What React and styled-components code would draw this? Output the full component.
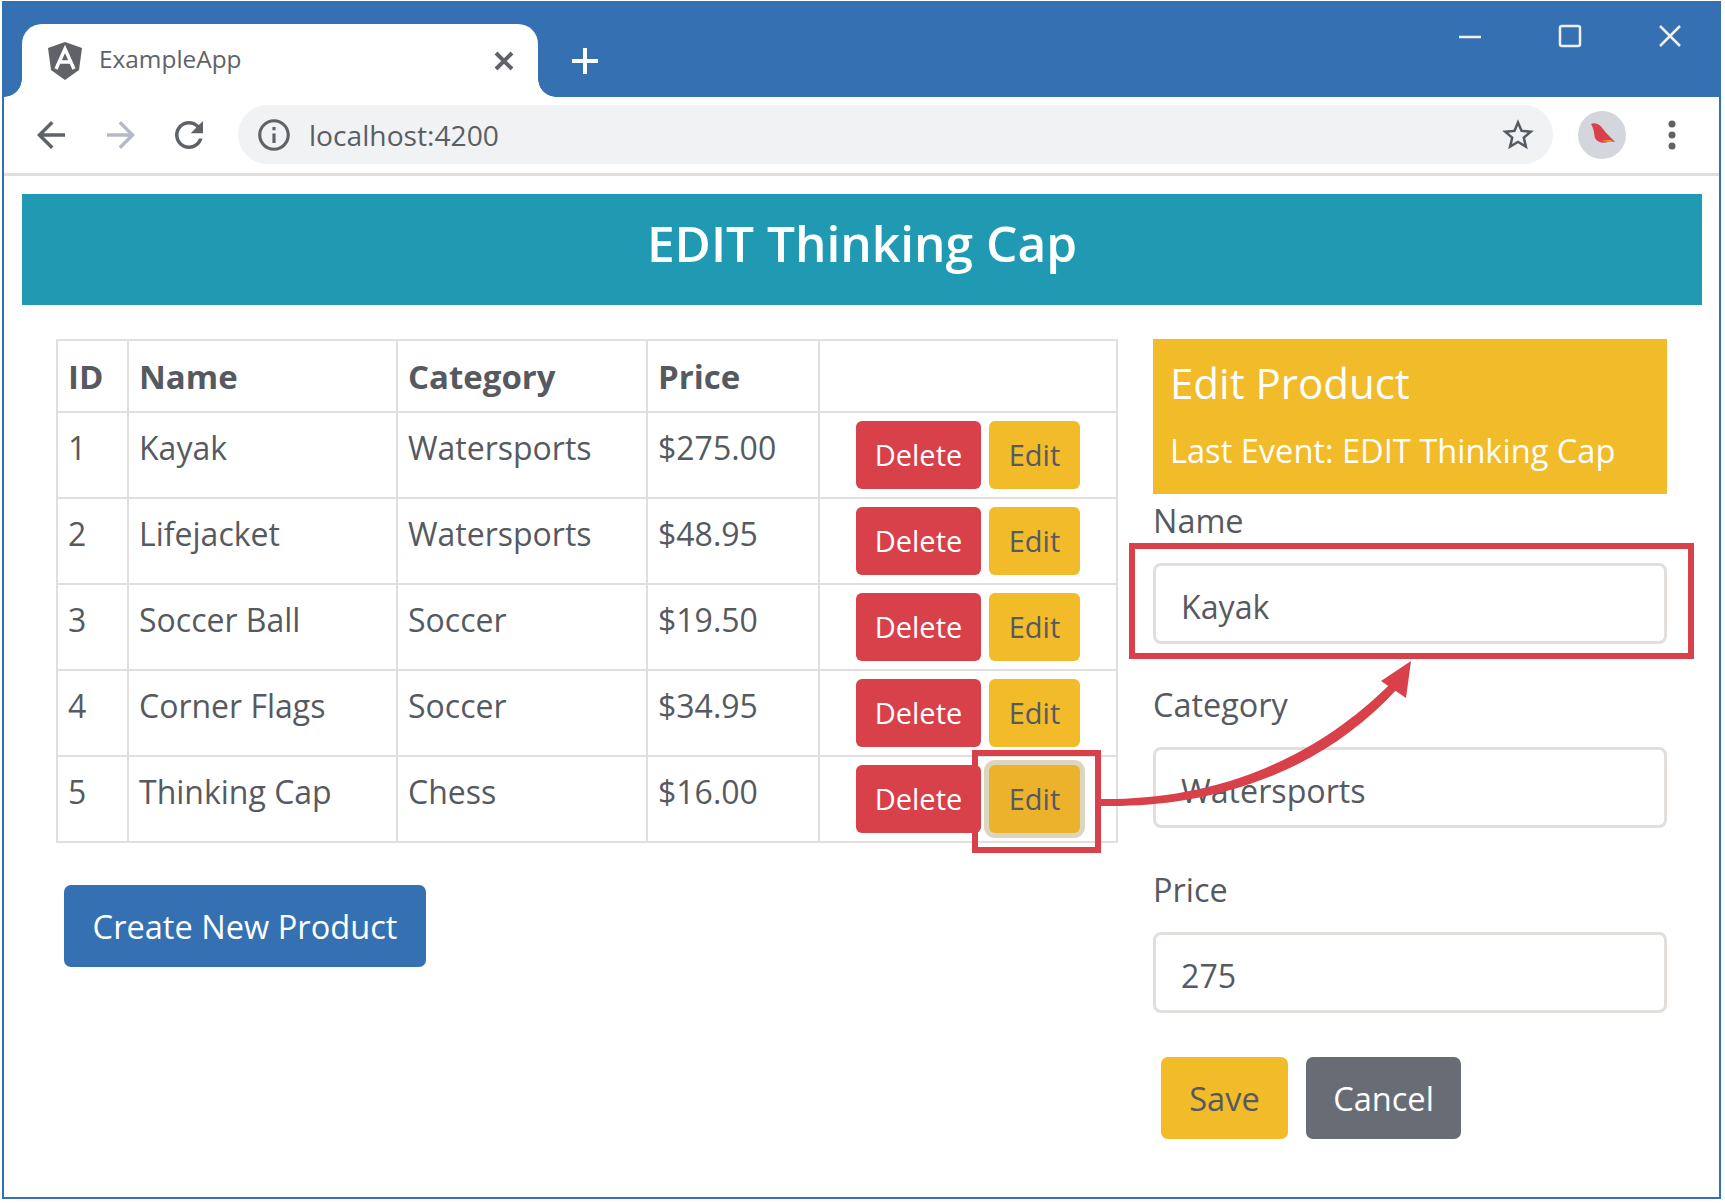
import React from "react";
import styled, { createGlobalStyle } from "styled-components";

const Global = createGlobalStyle`
  html, body { margin: 0; padding: 0; background: #fff; }
  body { font-family: "Open Sans", "Noto Sans", sans-serif; color: #565a60; }
  * { box-sizing: border-box; }
`;

const BLUE = "#3470b2";
const RED = "#d8404a";
const YELLOW = "#f1bb29";
const LINE = "#e2dedb";

const Frame = styled.div`
  position: relative;
  width: 1719px;
  height: 1198px;
  margin: 1px 0 0 2px;
  border: 2px solid ${BLUE};
  background: #fff;
  overflow: hidden;
`;
const TitleBar = styled.div`
  height: 94px;
  background: ${BLUE};
  display: flex;
  align-items: flex-start;
  padding-left: 18px;
`;
const Tab = styled.div`
  position: relative;
  width: 516px;
  height: 73px;
  margin-top: 21px;
  background: #fff;
  border-radius: 20px 20px 0 0;
  display: flex;
  align-items: center;
  padding: 0 24px 0 25px;
  &::before, &::after {
    content: "";
    position: absolute;
    bottom: 0;
    width: 18px;
    height: 18px;
  }
  &::before { left: -18px; background: radial-gradient(circle at 0 0, ${BLUE} 17.5px, #fff 18px); }
  &::after { right: -18px; background: radial-gradient(circle at 100% 0, ${BLUE} 17.5px, #fff 18px); }
`;
const TabTitle = styled.span`
  flex: 1;
  margin: 0 0 4px 16px;
  font-size: 24.4px;
  color: #5f6368;
`;
const NewTab = styled.svg`
  width: 28px;
  height: 28px;
  margin: 44px 0 0 33px;
`;
const Spacer = styled.div`flex: 1;`;
const WinControls = styled.div`
  display: flex;
  gap: 76px;
  padding: 21px 37px 0 0;
`;
const WinIcon = styled.svg`
  width: 24px;
  height: 24px;
  display: block;
`;
const Toolbar = styled.div`
  height: 79px;
  border-bottom: 3px solid ${LINE};
  display: flex;
  align-items: center;
  padding: 0 0 1px 26px;
`;
const NavIcon = styled.svg`
  width: ${(p) => p.$size || 42}px;
  height: ${(p) => p.$size || 42}px;
  display: block;
  margin-right: ${(p) => p.$gap || 0}px;
  flex: none;
`;
const AddressBar = styled.div`
  width: 1315px;
  height: 59px;
  border-radius: 30px;
  background: #f1f2f3;
  display: flex;
  align-items: center;
  padding: 0 16px 0 17px;
`;
const Url = styled.span`
  flex: 1;
  margin-left: 16px;
  font-size: 28.2px;
  color: #5a5e64;
`;
const Avatar = styled.svg`
  width: 48px;
  height: 48px;
  margin: 0 42px 0 25px;
  flex: none;
`;
const Banner = styled.h1`
  margin: 18px 17px 0 18px;
  height: 111px;
  background: #209ab3;
  color: #fff;
  font-size: 49.6px;
  font-weight: 600;
  text-align: center;
  line-height: 98px;
`;
const Main = styled.div`
  display: flex;
  margin-top: 34px;
  padding-left: 52px;
`;
const LeftCol = styled.div`
  width: 1062px;
  flex: none;
`;
const RightCol = styled.div`
  width: 514px;
  margin-left: 35px;
  flex: none;
`;
const Table = styled.table`
  width: 1060px;
  table-layout: fixed;
  border-collapse: collapse;
  font-size: 32px;
`;
const Th = styled.th`
  border: 2px solid ${LINE};
  height: 70px;
  padding: 11px 10px 9px;
  text-align: left;
  font-weight: 700;
  font-size: 33px;
  line-height: 50px;
  vertical-align: top;
`;
const Td = styled.td`
  border: 2px solid ${LINE};
  height: 86px;
  padding: 10px 10px;
  line-height: 50px;
  vertical-align: top;
`;
const ActionCell = styled(Td)`
  padding: 8px 0 0;
  text-align: center;
`;
const Actions = styled.div`
  display: flex;
  justify-content: center;
  gap: 8px;
`;
const SmallButton = styled.button`
  position: relative;
  height: 68px;
  width: ${(p) => p.$w}px;
  border: 0;
  border-radius: 6px;
  background: ${(p) => (p.$danger ? RED : YELLOW)};
  color: ${(p) => (p.$danger ? "#fff" : "#565a60")};
  font: 29px "Open Sans", sans-serif;
  padding: 0 0 2px;
  ${(p) => p.$focus && `
    background: #ecb22c;
    box-shadow: 0 0 0 5px #dcd5c0;
    &::after {
      content: "";
      position: absolute;
      inset: -15px -21px -20px -17px;
      border: 6px solid ${RED};
    }
  `}
`;
const CreateButton = styled.button`
  display: block;
  width: 362px;
  height: 82px;
  margin: 42px 0 0 8px;
  border: 0;
  border-radius: 7px;
  background: ${BLUE};
  color: #fff;
  font: 32.6px "Open Sans", sans-serif;
`;
const Panel = styled.div`
  height: 155px;
  background: ${YELLOW};
  color: #fff;
  padding: 14px 17px 0;
`;
const PanelTitle = styled.div`
  font-size: 42px;
  line-height: 60px;
  font-weight: 500;
`;
const PanelSub = styled.div`
  font-size: 32.6px;
  line-height: 48px;
  margin-top: 14px;
`;
const Field = styled.div`
  margin-top: ${(p) => p.$top}px;
`;
const Label = styled.label`
  display: block;
  font-size: 32.4px;
  line-height: 48px;
  margin-bottom: 19px;
`;
const InputWrap = styled.div`
  position: relative;
  ${(p) => p.$highlight && `
    &::after {
      content: "";
      position: absolute;
      inset: -20px -27px -15px -24px;
      border: 6px solid ${RED};
      pointer-events: none;
    }
  `}
`;
const Input = styled.input`
  display: block;
  width: 100%;
  height: 81px;
  border: 3px solid ${LINE};
  border-radius: 8px;
  padding: 6px 25px 0;
  font: 32.2px "Open Sans", sans-serif;
  color: #565a60;
  background: #fff;
  outline: none;
`;
const FormActions = styled.div`
  display: flex;
  gap: 18px;
  margin: 44px 0 0 8px;
`;
const FormButton = styled.button`
  height: 82px;
  width: ${(p) => p.$w}px;
  border: 0;
  border-radius: 7px;
  background: ${(p) => (p.$secondary ? "#686c74" : YELLOW)};
  color: ${(p) => (p.$secondary ? "#fff" : "#565a60")};
  font: 32.6px "Open Sans", sans-serif;
  padding: 0;
`;
const ArrowOverlay = styled.svg`
  position: absolute;
  left: -4px;
  top: -3px;
  width: 1725px;
  height: 1204px;
  pointer-events: none;
`;

const rows = [
  [1, "Kayak", "Watersports", "$275.00"],
  [2, "Lifejacket", "Watersports", "$48.95"],
  [3, "Soccer Ball", "Soccer", "$19.50"],
  [4, "Corner Flags", "Soccer", "$34.95"],
  [5, "Thinking Cap", "Chess", "$16.00"],
];

const AngularLogo = () => (
  <svg width="36" height="38" viewBox="0 0 36 38" style={{ flex: "none" }}>
    <path d="M18 0 L1 6 L4 28 L18 38 L32 28 L35 6 Z" fill="#5f6368" />
    <path d="M9 27 L18 7 L27 27 M12.5 20 H23.5" fill="none" stroke="#fff" strokeWidth="3.4" />
  </svg>
);

export default function App() {
  return (
    <>
      <Global />
      <Frame>
        <TitleBar>
          <Tab>
            <AngularLogo />
            <TabTitle>ExampleApp</TabTitle>
            <svg width="20" height="20" viewBox="0 0 20 20">
              <path d="M2 2 L18 18 M18 2 L2 18" stroke="#5f6368" strokeWidth="4" />
            </svg>
          </Tab>
          <NewTab viewBox="0 0 28 28">
            <path d="M14 1 V27 M1 14 H27" stroke="#fff" strokeWidth="4" />
          </NewTab>
          <Spacer />
          <WinControls>
            <WinIcon viewBox="0 0 24 24"><path d="M1 13 H23" stroke="#f0f0f0" strokeWidth="2.5" /></WinIcon>
            <WinIcon viewBox="0 0 24 24"><rect x="2" y="2" width="20" height="20" rx="2" fill="none" stroke="#f0f0f0" strokeWidth="2.5" /></WinIcon>
            <WinIcon viewBox="0 0 24 24"><path d="M2 2 L22 22 M22 2 L2 22" stroke="#f0f0f0" strokeWidth="2.5" /></WinIcon>
          </WinControls>
        </TitleBar>
        <Toolbar>
          <NavIcon $gap={28} viewBox="0 0 24 24"><path fill="#5f6368" d="M20 11H7.83l5.59-5.59L12 4l-8 8 8 8 1.41-1.41L7.83 13H20v-2z" /></NavIcon>
          <NavIcon $gap={26} viewBox="0 0 24 24"><path fill="#b4bac6" d="M12 4l-1.41 1.41L16.17 11H4v2h12.17l-5.58 5.59L12 20l8-8z" /></NavIcon>
          <NavIcon $gap={28} viewBox="0 0 24 24"><path fill="#5f6368" d="M17.65 6.35C16.2 4.9 14.21 4 12 4c-4.42 0-7.99 3.58-7.99 8s3.57 8 7.99 8c3.73 0 6.84-2.55 7.73-6h-2.08c-.82 2.33-3.04 4-5.65 4-3.31 0-6-2.69-6-6s2.69-6 6-6c1.66 0 3.14.69 4.22 1.78L13 11h7V4l-2.35 2.35z" /></NavIcon>
          <AddressBar>
            <NavIcon $size={38} viewBox="0 0 24 24"><path fill="#5f6368" d="M11 7h2v2h-2zm0 4h2v6h-2zm1-9C6.48 2 2 6.48 2 12s4.48 10 10 10 10-4.48 10-10S17.52 2 12 2zm0 18c-4.41 0-8-3.59-8-8s3.59-8 8-8 8 3.59 8 8-3.59 8-8 8z" /></NavIcon>
            <Url>localhost:4200</Url>
            <NavIcon $size={38} viewBox="0 0 24 24"><path fill="#565a64" d="M22 9.24l-7.19-.62L12 2 9.19 8.63 2 9.24l5.46 4.73L5.82 21 12 17.27 18.18 21l-1.63-7.03L22 9.24zM12 15.4l-3.76 2.27 1-4.28-3.32-2.88 4.38-.38L12 6.1l1.71 4.04 4.38.38-3.32 2.88 1 4.28L12 15.4z" /></NavIcon>
          </AddressBar>
          <Avatar viewBox="0 0 48 48">
            <circle cx="24" cy="24" r="24" fill="#d3d6dc" />
            <path d="M13 13 C17 11 22 13 25 18 C28 22 33 27 37 31 L30 31 C25 33 19 31 17 27 C16 22 16 18 13 13 Z" fill={RED} />
            <path d="M23 30 L36 31 L32 29 Z" fill={YELLOW} />
          </Avatar>
          <svg width="8" height="30" viewBox="0 0 8 30" style={{ flex: "none" }}>
            <circle cx="4" cy="4" r="3.5" fill="#5f6368" />
            <circle cx="4" cy="15" r="3.5" fill="#5f6368" />
            <circle cx="4" cy="26" r="3.5" fill="#5f6368" />
          </svg>
        </Toolbar>
        <Banner>EDIT Thinking Cap</Banner>
        <Main>
          <LeftCol>
            <Table>
              <colgroup>
                <col style={{ width: 71 }} />
                <col style={{ width: 269 }} />
                <col style={{ width: 250 }} />
                <col style={{ width: 172 }} />
                <col style={{ width: 298 }} />
              </colgroup>
              <thead>
                <tr>
                  <Th>ID</Th>
                  <Th>Name</Th>
                  <Th>Category</Th>
                  <Th>Price</Th>
                  <Th />
                </tr>
              </thead>
              <tbody>
                {rows.map(([id, name, category, price]) => (
                  <tr key={id}>
                    <Td>{id}</Td>
                    <Td>{name}</Td>
                    <Td>{category}</Td>
                    <Td>{price}</Td>
                    <ActionCell>
                      <Actions>
                        <SmallButton $danger $w={125}>Delete</SmallButton>
                        <SmallButton $w={91} $focus={id === 5}>Edit</SmallButton>
                      </Actions>
                    </ActionCell>
                  </tr>
                ))}
              </tbody>
            </Table>
            <CreateButton>Create New Product</CreateButton>
          </LeftCol>
          <RightCol>
            <Panel>
              <PanelTitle>Edit Product</PanelTitle>
              <PanelSub>Last Event: EDIT Thinking Cap</PanelSub>
            </Panel>
            <Field $top={2}>
              <Label>Name</Label>
              <InputWrap $highlight><Input readOnly value="Kayak" /></InputWrap>
            </Field>
            <Field $top={36}>
              <Label>Category</Label>
              <InputWrap><Input readOnly value="Watersports" /></InputWrap>
            </Field>
            <Field $top={37}>
              <Label>Price</Label>
              <InputWrap><Input readOnly value="275" /></InputWrap>
            </Field>
            <FormActions>
              <FormButton $w={127}>Save</FormButton>
              <FormButton $secondary $w={155}>Cancel</FormButton>
            </FormActions>
          </RightCol>
        </Main>
        <ArrowOverlay viewBox="0 0 1725 1204">
          <path d="M1101 799 C1190 800 1300 775 1392 682 L1398 688 C1310 785 1190 808 1101 806 Z" fill={RED} />
          <path d="M1411 661 L1381 681 L1406 698 Z" fill={RED} />
        </ArrowOverlay>
      </Frame>
    </>
  );
}
